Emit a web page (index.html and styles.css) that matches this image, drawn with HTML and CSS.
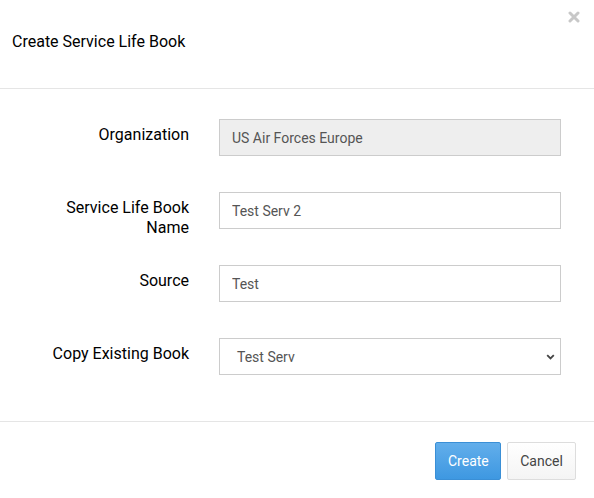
FILE: index.html
```html
<!DOCTYPE html>
<html>
<head>
<meta charset="utf-8">
<link rel="stylesheet" href="styles.css">
</head>
<body>
<div class="modal">
  <div class="modal-header">
    <h4 class="title">Create Service Life Book</h4>
    <button class="close" aria-label="Close">
      <svg width="12" height="12" viewBox="0 0 12 12"><path d="M2 2 L10 10 M10 2 L2 10" stroke="#c8c8c8" stroke-width="3" stroke-linecap="round"/></svg>
    </button>
  </div>
  <div class="modal-body">
    <div class="row">
      <label class="label">Organization</label>
      <input class="field disabled" value="US Air Forces Europe" disabled>
    </div>
    <div class="row">
      <label class="label">Service Life Book Name</label>
      <input class="field" value="Test Serv 2">
    </div>
    <div class="row">
      <label class="label">Source</label>
      <input class="field" value="Test">
    </div>
    <div class="row">
      <label class="label">Copy Existing Book</label>
      <div class="select">
        <span>Test Serv</span>
        <svg width="9" height="6" viewBox="0 0 9 6"><path d="M1.2 1.2 L4.5 4.5 L7.8 1.2" fill="none" stroke="#444" stroke-width="1.8"/></svg>
      </div>
    </div>
  </div>
  <div class="modal-footer">
    <button class="btn primary">Create</button>
    <button class="btn default">Cancel</button>
  </div>
</div>
</body>
</html>
```

FILE: styles.css
```css
html, body {
  margin: 0;
  padding: 0;
  background: #fff;
}
body {
  font-family: Roboto, "Liberation Sans", Arial, sans-serif;
  color: #000;
  width: 594px;
  height: 498px;
}
.modal {
  width: 594px;
}
.modal-header {
  position: relative;
  height: 89px;
  border-bottom: 1px solid #e5e5e5;
  box-sizing: border-box;
  padding: 32px 12px 0;
}
.title {
  margin: 0;
  font-size: 16px;
  font-weight: 400;
  line-height: 20px;
}
.close {
  position: absolute;
  right: 14px;
  top: 11px;
  background: none;
  border: 0;
  padding: 0;
  width: 12px;
  height: 12px;
  display: flex;
}
.modal-body {
  padding: 30px 0 46px;
  display: flex;
  flex-direction: column;
  gap: 36px;
}
.row {
  display: flex;
  align-items: flex-start;
  height: 37px;
}
.label {
  width: 189px;
  flex-shrink: 0;
  box-sizing: border-box;
  padding-left: 50px;
  text-align: right;
  font-size: 16px;
  font-weight: 400;
  line-height: 20px;
  padding-top: 6px;
  color: #000;
}
.field, .select {
  margin-left: 30px;
  width: 342px;
  height: 37px;
  box-sizing: border-box;
  border: 1px solid #ccc;
  background: #fff;
  font-family: Roboto, "Liberation Sans", Arial, sans-serif;
  font-size: 14px;
  color: #555;
  padding: 0 12px;
  outline: none;
  border-radius: 0;
}
.field.disabled {
  background: #eee;
}
.select {
  display: flex;
  align-items: center;
  justify-content: space-between;
  padding: 0 5px 0 17px;
}
.modal-footer {
  border-top: 1px solid #e5e5e5;
  display: flex;
  justify-content: flex-end;
  gap: 6px;
  padding: 20px 18px 0 0;
}
.btn {
  height: 38px;
  font-family: Roboto, "Liberation Sans", Arial, sans-serif;
  font-size: 14px;
  border-radius: 2px;
  padding: 0 12px;
  cursor: pointer;
}
.btn.primary {
  width: 66px;
  background: linear-gradient(#62aeeb, #3e98e1);
  border: 1px solid #3a8fd6;
  color: #fff;
}
.btn.default {
  width: 69px;
  background: linear-gradient(#fff, #f4f4f4);
  border: 1px solid #ddd;
  color: #444;
}
```
